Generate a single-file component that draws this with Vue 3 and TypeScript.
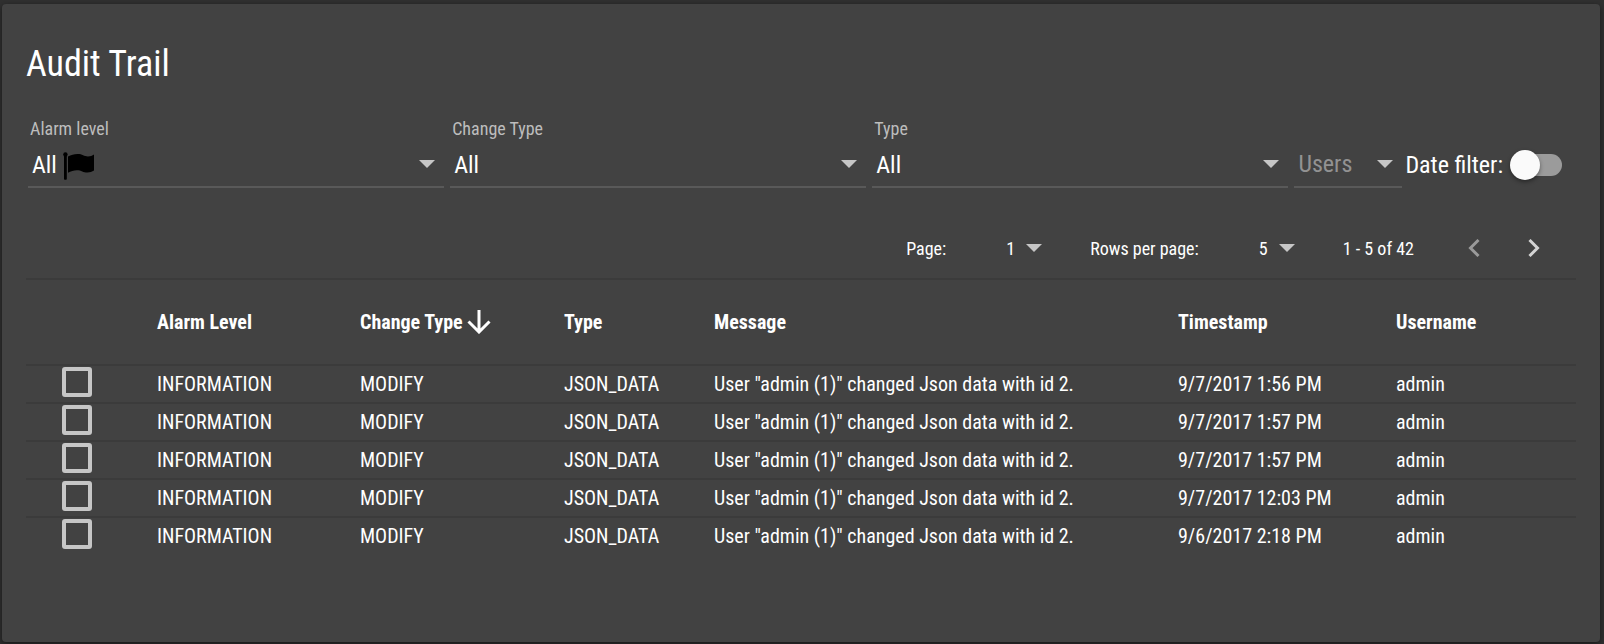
<script setup lang="ts">
import { ref } from 'vue'

interface Filter {
  id: string
  label: string
  options: string[]
  flag?: boolean
}

interface AuditRow {
  level: string
  change: string
  type: string
  message: string
  timestamp: string
  username: string
}

const filters: Filter[] = [
  { id: 'alarm-level', label: 'Alarm level', options: ['All'], flag: true },
  { id: 'change-type', label: 'Change Type', options: ['All'] },
  { id: 'object-type', label: 'Type', options: ['All'] },
]

const timestamps: string[] = [
  '9/7/2017 1:56 PM',
  '9/7/2017 1:57 PM',
  '9/7/2017 1:57 PM',
  '9/7/2017 12:03 PM',
  '9/6/2017 2:18 PM',
]

const rows: AuditRow[] = timestamps.map((timestamp) => ({
  level: 'INFORMATION',
  change: 'MODIFY',
  type: 'JSON_DATA',
  message: 'User "admin (1)" changed Json data with id 2.',
  timestamp,
  username: 'admin',
}))

const dateFilter = ref(false)
const selected = ref<number[]>([])
</script>

<template>
  <main class="card">
    <h1 class="title">Audit Trail</h1>

    <form class="filters" @submit.prevent>
      <div v-for="f in filters" :key="f.id" class="field">
        <label class="field-label" :for="f.id">{{ f.label }}</label>
        <div class="control">
          <select :id="f.id" class="select value">
            <option v-for="o in f.options" :key="o">{{ o }}</option>
          </select>
          <svg v-if="f.flag" class="flag" viewBox="0 0 32 28" aria-hidden="true">
            <circle cx="2.4" cy="2.4" r="2.2" />
            <path d="M1 2.4h2.8v24.6a.8.8 0 0 1-.8.8H1.800a.8.8 0 0 1-.8-.8z" />
            <path d="M5 4.600C8 3 11 2 14.500 2c5 0 6.500 2.400 10.500 2.400 2.300 0 4.300-1 6-2v16.200c-2 1.200-4 2-6.600 2-4.200 0-5.900-2.400-10.600-2.400-3 0-6 1-8.800 2.600z" />
          </svg>
          <svg class="caret" viewBox="0 0 16 8" aria-hidden="true"><path d="M0 0h16l-8 8z" /></svg>
        </div>
      </div>
      <div class="field users">
        <div class="control">
          <select class="select placeholder" aria-label="Users">
            <option>Users</option>
          </select>
          <svg class="caret" viewBox="0 0 16 8" aria-hidden="true"><path d="M0 0h16l-8 8z" /></svg>
        </div>
      </div>
      <label class="toggle">
        <span>Date filter:</span>
        <input v-model="dateFilter" class="switch" type="checkbox" role="switch" />
      </label>
    </form>

    <nav class="pagination" aria-label="Pagination">
      <label for="page">Page:</label>
      <div class="control pager">
        <select id="page" class="select small"><option>1</option></select>
        <svg class="caret" viewBox="0 0 16 8" aria-hidden="true"><path d="M0 0h16l-8 8z" /></svg>
      </div>
      <label for="rows-per-page">Rows per page:</label>
      <div class="control pager">
        <select id="rows-per-page" class="select small"><option>5</option></select>
        <svg class="caret" viewBox="0 0 16 8" aria-hidden="true"><path d="M0 0h16l-8 8z" /></svg>
      </div>
      <span class="range">1 - 5 of 42</span>
      <button class="step" type="button" aria-label="Previous page" disabled>
        <svg viewBox="0 0 12 18" aria-hidden="true"><path d="M10.500 1 2.500 9l8 8" /></svg>
      </button>
      <button class="step" type="button" aria-label="Next page">
        <svg viewBox="0 0 12 18" aria-hidden="true"><path d="M1.500 1l8 8-8 8" /></svg>
      </button>
    </nav>

    <table class="table">
      <colgroup>
        <col class="c-check" />
        <col class="c-level" />
        <col class="c-change" />
        <col class="c-type" />
        <col class="c-message" />
        <col class="c-time" />
        <col class="c-user" />
      </colgroup>
      <thead>
        <tr>
          <th></th>
          <th scope="col">Alarm Level</th>
          <th scope="col" aria-sort="descending">
            <span class="sorted">
              Change Type
              <svg class="sort" viewBox="0 0 24 24" aria-hidden="true">
                <path d="M12 0v22M1.500 11.500 12 22l10.500-10.500" />
              </svg>
            </span>
          </th>
          <th scope="col">Type</th>
          <th scope="col">Message</th>
          <th scope="col">Timestamp</th>
          <th scope="col">Username</th>
        </tr>
      </thead>
      <tbody>
        <tr v-for="(row, i) in rows" :key="i">
          <td class="check">
            <input v-model="selected" class="box" type="checkbox" :value="i" :aria-label="`Select row ${i + 1}`" />
          </td>
          <td>{{ row.level }}</td>
          <td>{{ row.change }}</td>
          <td>{{ row.type }}</td>
          <td>{{ row.message }}</td>
          <td>{{ row.timestamp }}</td>
          <td>{{ row.username }}</td>
        </tr>
      </tbody>
    </table>
  </main>
</template>

<style>
body {
  background: #303030;
}
</style>

<style scoped>
.card {
  box-sizing: border-box;
  min-height: calc(100vh - 6px);
  margin: 4px 4px 2px 2px;
  padding: 36px 24px;
  border-radius: 4px;
  background: #424242;
  box-shadow: 0 2px 6px rgba(0, 0, 0, 0.5);
  color: #fff;
  font-family: 'Roboto Condensed', Roboto, 'Liberation Sans', sans-serif;
  font-size: 20px;
}

.title {
  margin: 0;
  font-size: 36px;
  font-weight: 400;
  line-height: 48px;
}

.filters {
  display: flex;
  align-items: flex-end;
  gap: 6px;
  margin-top: 28px;
  padding: 0 14px 0 2px;
}

.field {
  flex: 1;
  min-width: 0;
}

.users {
  flex: 0 0 108px;
}

.field-label {
  display: block;
  margin-left: 2px;
  color: #bdbdbd;
  font-size: 18px;
  line-height: 26px;
}

.control {
  position: relative;
  display: flex;
  align-items: center;
}

.field .control {
  height: 44px;
  border-bottom: 2px solid #595959;
}

.select {
  box-sizing: border-box;
  width: 100%;
  height: 100%;
  margin: 0;
  padding: 0 4px;
  border: 0;
  border-radius: 0;
  outline: 0;
  appearance: none;
  background: transparent;
  color: #fff;
  font-family: inherit;
  font-size: 24px;
}

.value {
  padding-top: 2px;
}

.placeholder {
  color: #929292;
}

.small {
  padding: 0;
  font-size: 18px;
}

.caret {
  position: absolute;
  right: 9px;
  width: 16px;
  height: 8px;
  fill: #c6c6c6;
  pointer-events: none;
}

.flag {
  position: absolute;
  top: 10px;
  left: 35px;
  width: 32px;
  height: 28px;
  fill: #000;
  pointer-events: none;
}

.toggle {
  display: flex;
  align-items: center;
  gap: 7px;
  height: 46px;
  margin-left: -3px;
  font-size: 24px;
  white-space: nowrap;
}

.switch {
  position: relative;
  width: 52px;
  height: 30px;
  margin: 0;
  appearance: none;
}

.switch::before {
  content: '';
  position: absolute;
  inset: 4px 0 4px 4px;
  border-radius: 11px;
  background: #9b9b9b;
}

.switch::after {
  content: '';
  position: absolute;
  top: 0;
  left: 0;
  width: 30px;
  height: 30px;
  border-radius: 50%;
  background: #fafafa;
  box-shadow: 0 2px 4px rgba(0, 0, 0, 0.4);
}

.switch:checked::after {
  left: 22px;
}

.pagination {
  display: flex;
  align-items: center;
  justify-content: flex-end;
  height: 60px;
  margin-top: 30px;
  padding-right: 30px;
  font-size: 18px;
}

.pager {
  width: 36px;
  height: 40px;
  margin: 0 48px 0 60px;
}

.pager .caret {
  right: 0;
}

.range {
  margin-right: 48px;
}

.step {
  display: flex;
  justify-content: center;
  width: 24px;
  padding: 0;
  border: 0;
  background: none;
}

.step + .step {
  margin-left: 36px;
}

.step svg {
  width: 12px;
  height: 18px;
  fill: none;
  stroke: #d4d4d4;
  stroke-width: 3;
}

.step:disabled svg {
  stroke: #9a9a9a;
}

.table {
  width: 100%;
  border-collapse: separate;
  border-spacing: 0;
  table-layout: fixed;
}

.c-check { width: 131px; }
.c-level { width: 203px; }
.c-change { width: 204px; }
.c-type { width: 150px; }
.c-time { width: 218px; }
.c-user { width: 180px; }

th,
td {
  padding: 0;
  border-top: 2px solid #3b3b3b;
  text-align: left;
  white-space: nowrap;
}

th {
  height: 84px;
  font-weight: 700;
}

td {
  height: 36px;
}

.check {
  vertical-align: top;
}

.sorted {
  display: flex;
  align-items: center;
  gap: 4px;
}

.sort {
  width: 24px;
  height: 24px;
  fill: none;
  stroke: #fff;
  stroke-width: 3;
}

.box {
  display: block;
  width: 30px;
  height: 30px;
  margin: 1px 0 0 36px;
  border: 4px solid #c6c6c6;
  border-radius: 3px;
  appearance: none;
}

.box:checked {
  background: #c6c6c6;
}
</style>
